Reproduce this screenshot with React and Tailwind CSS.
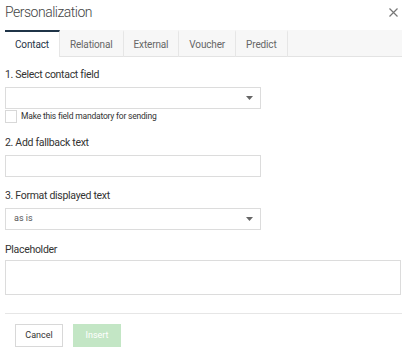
import React, { useState } from "react";

const tabs = ["Contact", "Relational", "External", "Voucher", "Predict"];

const Caret = () => (
  <svg width="7" height="4" viewBox="0 0 7 4" className="absolute right-[7px] top-1/2 -translate-y-1/2">
    <path d="M0 0h7L3.5 4z" fill="#666" />
  </svg>
);

const Label = ({ children, className = "" }) => (
  <div className={`text-[10.5px] leading-[14px] tracking-[-0.3px] text-[#333] ${className}`}>{children}</div>
);

export default function App() {
  const [active, setActive] = useState("Contact");
  const [mandatory, setMandatory] = useState(false);

  return (
    <div
      className="w-[407px] h-[360px] bg-white px-[5px] overflow-hidden"
      style={{ fontFamily: "Roboto, 'Liberation Sans', sans-serif" }}
    >
      <div className="h-[30px] flex items-start justify-between pt-[2px]">
        <h1 className="text-[14px] leading-[20px] font-light text-[#444] tracking-[-0.5px]">
          Personalization
        </h1>
        <button className="mt-[6px] mr-[4px]" aria-label="Close">
          <svg width="9" height="9" viewBox="0 0 9 9" className="block">
            <path d="M0.5 0.5l8 8M8.5 0.5l-8 8" stroke="#777" strokeWidth="1.2" />
          </svg>
        </button>
      </div>

      {/* tabs */}
      <div className="flex h-[27px] bg-[#f7f7f7] border-b border-[#e3e3e3]">
        {tabs.map((t) => {
          const on = t === active;
          return (
            <button
              key={t}
              onClick={() => setActive(t)}
              className={`h-[27px] px-[10px] text-[10px] tracking-[-0.15px] border-r border-[#e6e6e6] ${
                on
                  ? "bg-white border-t-2 border-t-[#1f3447] text-[#1f3447] -mb-px pb-[1px]"
                  : "text-[#666] border-t-2 border-t-transparent"
              }`}
            >
              {t}
            </button>
          );
        })}
      </div>

      <Label className="mt-[11px]">1. Select contact field</Label>
      <div className="relative mt-[5px] w-[256px] h-[22px] border border-[#dcdcdc] bg-white">
        <Caret />
      </div>
      <label className="flex items-center gap-[4px] h-[14px] cursor-pointer">
        <span
          onClick={() => setMandatory(!mandatory)}
          className="w-[12px] h-[13px] border border-[#d8d8d8] bg-white"
        />
        <span className="text-[8.5px] tracking-[-0.2px] text-[#333]">Make this field mandatory for sending</span>
      </label>

      <Label className="mt-[13px]">2. Add fallback text</Label>
      <input className="block mt-[5px] w-[256px] h-[22px] border border-[#dcdcdc] outline-none px-2 text-[11px]" />

      <Label className="mt-[12px]">3. Format displayed text</Label>
      <div className="relative mt-[5px] w-[256px] h-[22px] border border-[#dcdcdc] bg-white flex items-center px-[8px]">
        <span className="text-[9px] text-[#555]">as is</span>
        <Caret />
      </div>

      <Label className="mt-[13px]">Placeholder</Label>
      <textarea className="block mt-[3px] w-[396px] h-[35px] border border-[#dcdcdc] outline-none resize-none" />

      <div className="mt-[18px] border-t border-[#e6e6e6]" />

      <div className="flex gap-[10px] mt-[10px] pl-[10px]">
        <button className="w-[48px] h-[23px] border border-[#d8d8d8] bg-white text-[9px] text-[#333]">
          Cancel
        </button>
        <button className="w-[48px] h-[23px] bg-[#c3e6c5] text-[9px] text-white" disabled>
          Insert
        </button>
      </div>
    </div>
  );
}
